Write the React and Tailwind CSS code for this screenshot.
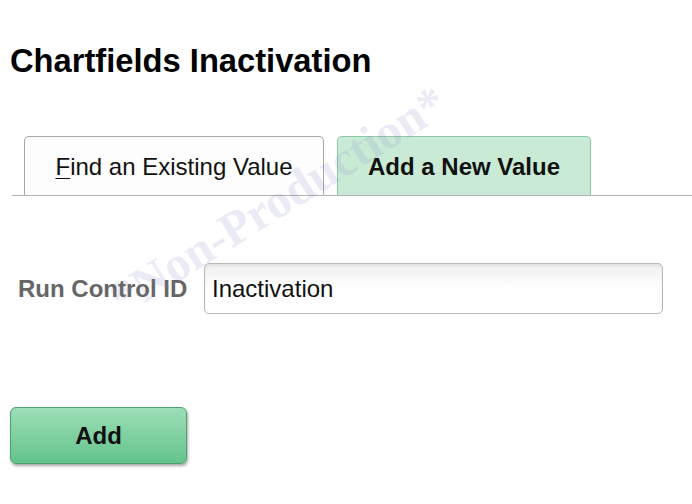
export default function App() {
  return (
    <div className="relative h-[504px] w-[692px] overflow-hidden bg-white font-['Liberation_Sans',Arial,sans-serif] text-black">
      {/* Page title */}
      <h1 className="ml-[10px] pt-[42px] text-[32.7px] font-bold leading-[37px]">
        Chartfields Inactivation
      </h1>

      {/* Tabs */}
      <div className="ml-[12px] mt-[58px] flex h-[59px] items-end gap-[13px] border-b border-[#b3b3b3] pl-[12px]">
        <div className="flex h-[59px] w-[300px] items-center justify-center rounded-t-[5px] border border-b-0 border-[#a8a8a8] bg-[#fdfdfd] pt-[2px] text-[24px] text-[#111]">
          <span>
            <span className="underline decoration-1 underline-offset-[3px]">F</span>ind an Existing Value
          </span>
        </div>
        <div className="flex h-[59px] w-[254px] items-center justify-center rounded-t-[5px] border border-b-0 border-[#8dc9a4] bg-[#c9ebd6] pt-[2px] text-[24px] font-bold text-[#111]">
          Add a New Value
        </div>
      </div>

      {/* Run control field */}
      <div className="mt-[67px] flex items-center">
        <label className="ml-[18px] w-[186px] text-[24px] font-bold text-[#666]">Run Control ID</label>
        <div className="flex h-[51px] w-[459px] items-center rounded-[5px] border border-[#b8b8b8] bg-gradient-to-b from-[#efefef] via-white to-white pl-[7px] text-[24px] text-[#111] shadow-[inset_0_2px_3px_rgba(0,0,0,0.06)]">
          Inactivation
        </div>
      </div>

      {/* Add button */}
      <button className="ml-[10px] mt-[93px] flex h-[57px] w-[177px] items-center justify-center rounded-[6px] border border-[#4f9e70] bg-gradient-to-b from-[#9cdeb7] to-[#62c38b] text-[24px] font-bold text-[#111] shadow-[1px_2px_3px_rgba(0,0,0,0.35)]">
        Add
      </button>

      {/* Watermark overlay */}
      <div className="pointer-events-none absolute left-[278px] top-[200px] -translate-x-1/2 -translate-y-1/2 -rotate-[32deg] whitespace-nowrap font-['Liberation_Serif',serif] text-[49px] font-semibold leading-none text-[rgba(130,130,200,0.16)]">
        *Non-Production*
      </div>
    </div>
  );
}
